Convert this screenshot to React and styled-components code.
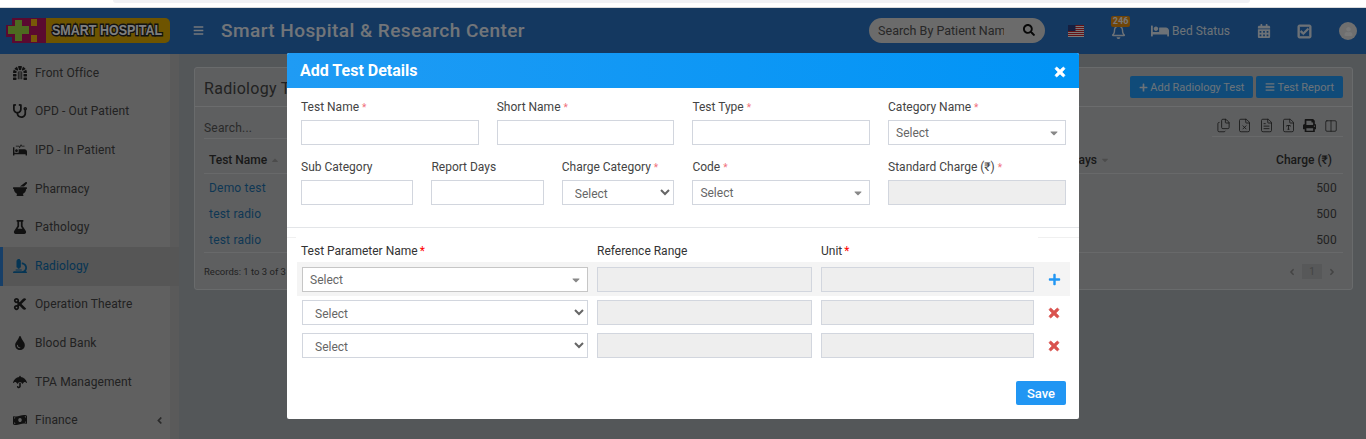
import React from 'react';
import styled, { createGlobalStyle } from 'styled-components';
import {
  FaDungeon, FaStethoscope, FaProcedures, FaMortarPestle, FaFlask, FaMicroscope, FaCut, FaTint,
  FaUmbrella, FaMoneyBillWave, FaBars, FaSearch, FaRegBell, FaBed, FaCalendarAlt, FaRegCheckSquare,
  FaUser, FaPlus, FaPrint, FaTimes, FaAngleLeft, FaAngleRight, FaCaretDown, FaCaretUp,
} from 'react-icons/fa';
import { Files, FileX, FileText, FileType, Columns2 } from 'lucide-react';

const Global = createGlobalStyle`
  html, body { margin: 0; padding: 0; height: 439px; overflow: hidden; background: #fff; }
  body, input, select, button { font-family: Roboto, "Liberation Sans", sans-serif; }
  * { box-sizing: border-box; }
`;

const Page = styled.div`
  width: 1366px;
  height: 439px;
  overflow: hidden;
  display: flex;
  flex-direction: column;
`;
const BrowserStrip = styled.div`
  height: 8px;
  flex: none;
  background: #fff;
  border-bottom: 1px solid #d9dadc;
  padding-left: 113px;
`;
const StripTab = styled.div`
  width: 1137px;
  height: 3px;
  background: #f0f1f5;
  border-radius: 0 0 10px 10px;
`;
const Stage = styled.div`
  position: relative;
  flex: 1;
  min-height: 0;
  display: flex;
  flex-direction: column;
  overflow: hidden;
`;
const Navbar = styled.header`
  height: 46px;
  flex: none;
  background: #2870c0;
  display: flex;
  align-items: center;
  padding: 0 0 2px 5px;
  color: #fff;
`;
const Logo = styled.div`
  width: 165px;
  height: 25px;
  display: flex;
  align-items: center;
  background: linear-gradient(to right, transparent 30px, #dca800 30px);
  border-radius: 0 5px 5px 0;
`;
const LogoText = styled.span`
  font: bold 12.5px/25px "Liberation Sans", sans-serif;
  color: #fff;
  -webkit-text-stroke: 2.4px #222;
  paint-order: stroke fill;
  margin-left: 6px;
  white-space: nowrap;
  transform: scaleY(1.15);
`;
const Burger = styled.span`
  display: flex;
  margin-left: 23px;
  font-size: 11px;
  color: #e8eef6;
`;
const AppTitle = styled.h1`
  margin: 0 0 0 17px;
  font-size: 19px;
  font-weight: 500;
  letter-spacing: 0.45px;
  color: #e4ebf3;
  white-space: nowrap;
`;
const NavRight = styled.div`
  margin-left: auto;
  display: flex;
  align-items: center;
  height: 100%;
`;
const SearchPill = styled.div`
  width: 176px;
  height: 25px;
  border-radius: 13px;
  background: #d6d6d6;
  display: flex;
  align-items: center;
  padding: 0 10px 0 9px;
  color: #111;
  font-size: 12px;
`;
const SearchField = styled.input`
  flex: 1;
  width: 0;
  border: 0;
  background: none;
  outline: none;
  font-size: 12.5px;
  padding: 0;
  margin-right: 19px;
  color: #333;
  &::placeholder { color: #4e4e4e; opacity: 1; }
`;
const NavIcon = styled.span`
  display: flex;
  align-items: center;
  color: #dbe4ee;
  font-size: ${(p) => p.$size || 15}px;
  margin-left: ${(p) => p.$left}px;
  position: relative;
  top: 1px;
`;
const HeavyIcon = styled.span`
  display: flex;
  svg { stroke: currentColor; stroke-width: ${(p) => p.$weight || 30}; }
`;
const Badge = styled.span`
  position: absolute;
  left: 0;
  top: -8px;
  width: 19px;
  height: 11px;
  border-radius: 2px;
  background: #e08a10;
  color: #f0f0f0;
  font-size: 9px;
  font-weight: 700;
  line-height: 11px;
  text-align: center;
`;
const BedLabel = styled.span`
  font-size: 12px;
  margin-left: 3px;
  color: #dbe4ee;
`;
const Avatar = styled.span`
  width: 18px;
  height: 18px;
  margin: 2px 9px 0 27px;
  border-radius: 50%;
  background: #dedede;
  display: flex;
  align-items: center;
  justify-content: center;
  color: #f2f2f2;
  font-size: 9px;
`;
const Main = styled.div`
  flex: 1;
  min-height: 0;
  display: flex;
  background: #a9aeb3;
`;
const Sidebar = styled.nav`
  width: 179px;
  flex: none;
  background: linear-gradient(to right, #c0c0c0 170px, #b4b4b4 170px);
`;
const MenuItem = styled.div`
  height: 38.6px;
  display: flex;
  align-items: center;
  padding: 0 0 1px ${(p) => (p.$active ? 10 : 13)}px;
  font-size: 12px;
  letter-spacing: 0.1px;
  color: ${(p) => (p.$active ? '#0b6aa8' : '#444')};
  background: ${(p) => (p.$active ? '#acacac' : 'transparent')};
  border-left: ${(p) => (p.$active ? '3px solid #2e7fd0' : '0')};
`;
const MenuIcon = styled.span`
  width: 22px;
  flex: none;
  display: flex;
  font-size: 14px;
  color: ${(p) => (p.$active ? '#0b6aa8' : '#222')};
`;
const MenuChevron = styled.span`
  margin-left: auto;
  margin-right: 14px;
  display: flex;
  font-size: 11px;
  color: #555;
`;
const Content = styled.main`
  flex: 1;
  padding: 13px 13px 0 15px;
`;
const Panel = styled.section`
  height: 223px;
  background: #bcbec0;
  border: 1px solid #d2d6d9;
  border-radius: 3px;
`;
const PanelHead = styled.div`
  height: 39px;
  border-bottom: 1px solid #d6d8da;
  display: flex;
  align-items: center;
  padding: 0 9px;
`;
const PanelTitle = styled.h2`
  margin: 2px 0 0;
  font-size: 16px;
  font-weight: 400;
  letter-spacing: 0.3px;
  color: #444;
`;
const HeadButton = styled.button`
  height: 22px;
  border: 0;
  border-radius: 2px;
  background: #2196f3;
  color: #d8e6f2;
  font-size: 11px;
  padding: 0 9px;
  margin-left: ${(p) => (p.$push ? 'auto' : `${p.$left}px`)};
  display: flex;
  align-items: center;
  gap: 2px;
  white-space: nowrap;
`;
const PanelBody = styled.div`
  padding: 0 9px;
`;
const ToolRow = styled.div`
  height: 32px;
  display: flex;
  justify-content: space-between;
`;
const TableSearch = styled.div`
  width: 700px;
  border-bottom: 1px solid #d0d2d4;
  padding-top: 14px;
  font-size: 12px;
  letter-spacing: 0.2px;
  color: #555;
`;
const ExportBar = styled.div`
  width: 131px;
  height: 30px;
  border-bottom: 1px solid #d0d2d4;
  display: flex;
  align-items: center;
  justify-content: flex-end;
  padding: 8px 1px 0 0;
  color: #2a2a2a;
`;
const ExportTool = styled.span`
  width: 21.6px;
  display: flex;
  justify-content: center;
  font-size: 13.5px;
`;
const TableHead = styled.div`
  height: 35px;
  display: grid;
  grid-template-columns: 1fr auto 233px;
  align-items: center;
  padding-top: 7px;
  border-bottom: 1px solid #d0d2d4;
  font-size: 12px;
  font-weight: 500;
  color: #333;
`;
const HeadCell = styled.span`
  display: flex;
  align-items: center;
  gap: 3px;
  justify-content: ${(p) => (p.$end ? 'flex-end' : 'flex-start')};
  padding: ${(p) => (p.$end ? '0 11px 0 0' : '0 0 0 5px')};
`;
const SortCaret = styled.span`
  display: flex;
  font-size: 10px;
  color: #999;
`;
const TableRow = styled.div`
  height: 26px;
  display: flex;
  justify-content: space-between;
  align-items: center;
  padding: 1px 6px 0 5px;
  font-size: 12px;
  letter-spacing: 0.2px;
  color: #444;
`;
const RowLink = styled.span`
  color: #1d6fa8;
`;
const TableFoot = styled.div`
  border-top: 1px solid #d0d2d4;
  height: 37px;
  display: flex;
  justify-content: space-between;
  align-items: center;
  font-size: 9.5px;
  color: #444;
  padding-top: 1px;
`;
const Pager = styled.div`
  display: flex;
  align-items: center;
  gap: 5px;
  margin-right: 6px;
  font-size: 10px;
  color: #888;
`;
const PageNum = styled.span`
  width: 20px;
  height: 15px;
  background: #aeb0b2;
  text-align: center;
  line-height: 15px;
`;
const Overlay = styled.div`
  position: absolute;
  inset: 0;
  background: rgba(0, 0, 0, 0.5);
`;
const Modal = styled.div`
  position: absolute;
  left: 287px;
  top: 45px;
  width: 792px;
  height: 366px;
  background: #fff;
  border-radius: 2px;
  overflow: hidden;
`;
const ModalHead = styled.div`
  height: 35px;
  background: linear-gradient(to right, #1f9bf4, #0094f6);
  color: #fff;
  display: flex;
  align-items: center;
  justify-content: space-between;
  padding: 0 12px 0 13px;
`;
const ModalTitle = styled.h3`
  margin: 0;
  font-size: 16px;
  font-weight: 700;
`;
const CloseIcon = styled.span`
  display: flex;
  font-size: 14px;
  position: relative;
  top: 1px;
  svg { stroke: currentColor; stroke-width: 30; }
`;
const FormBody = styled.div`
  padding: 11px 14px 0 14px;
  display: flex;
  flex-direction: column;
  gap: 14px;
`;
const FieldRow = styled.div`
  display: grid;
  grid-template-columns: repeat(4, 177.5px);
  column-gap: 18.2px;
`;
const SubGrid = styled.div`
  grid-column: span 2;
  display: grid;
  grid-template-columns: repeat(3, 112.4px);
  column-gap: 18px;
`;
const Field = styled.div`
  display: flex;
  flex-direction: column;
  min-width: 0;
`;
const Label = styled.label`
  height: 16px;
  line-height: 16px;
  margin-bottom: 5px;
  font-size: 12px;
  color: #444;
  white-space: nowrap;
`;
const Req = styled.span`
  color: #f0707a;
  font-size: 10px;
  margin-left: 3px;
`;
const TextInput = styled.input`
  width: 100%;
  height: 25px;
  border: 1px solid #d2d6de;
  background: ${(p) => (p.readOnly ? '#eee' : '#fff')};
  padding: 0 8px;
  border-radius: 0;
  outline: none;
  display: block;
`;
const FakeSelect = styled.div`
  height: 25px;
  border: 1px solid ${(p) => (p.$strong ? '#c6c6c6' : '#d2d6de')};
  background: #fff;
  display: flex;
  align-items: center;
  justify-content: space-between;
  padding: 0 5px 0 7px;
  font-size: 12px;
  color: #666;
`;
const SelectCaret = styled.span`
  display: flex;
  font-size: 12px;
  color: #888;
`;
const NativeSelect = styled.select`
  width: 100%;
  height: 25px;
  border: 1px solid #d2d6de;
  background: #fff;
  padding: 2px 8px 0;
  border-radius: 0;
  font-size: 12px;
  color: #666;
  outline: none;
`;
const Divider = styled.hr`
  margin: 22px 0 0;
  border: 0;
  border-top: 1px solid #e3e5e8;
`;
const FaintRule = styled.div`
  margin-top: 9px;
  height: 1px;
  display: flex;
  justify-content: space-between;
`;
const FaintPiece = styled.span`
  width: ${(p) => p.$w}px;
  background: #f0f0f0;
`;
const ParamTable = styled.div`
  margin: 5px 9px 0 10px;
`;
const ParamGrid = styled.div`
  display: grid;
  grid-template-columns: 286px 215px 213px 27px;
  column-gap: 9px;
  align-items: center;
  padding: ${(p) => p.$pad};
  background: ${(p) => (p.$hl ? '#f4f4f4' : 'transparent')};
`;
const ParamLabel = styled.span`
  font-size: 12px;
  color: #333;
  line-height: 16px;
  margin-left: ${(p) => p.$shift || 0}px;
  white-space: nowrap;
`;
const ReqStrong = styled.span`
  color: #f00;
  margin-left: 2px;
`;
const Action = styled.span`
  display: flex;
  justify-content: center;
  font-size: ${(p) => p.$size}px;
  color: ${(p) => p.$color};
  padding-right: 5px;
  svg { stroke: currentColor; stroke-width: ${(p) => p.$weight || 0}; }
`;
const ModalFoot = styled.div`
  display: flex;
  justify-content: flex-end;
  padding: 23px 13px 0 0;
`;
const SaveButton = styled.button`
  width: 50px;
  height: 24px;
  border: 0;
  border-radius: 2px;
  background: #2196f3;
  color: #fff;
  font-size: 13px;
  font-weight: 500;
`;

const LogoMark = () => (
  <svg width="41" height="25" viewBox="0 0 41 25" style={{ flex: 'none' }}>
    <path d="M7 0H41V25H7V19H1V7H7Z" fill="#b41460" />
    <path d="M10 2H17V8H24V16H17V23H10V16H3V8H10Z" fill="#9ad440" />
    <path d="M26 1H32V8H26ZM26 17H32V24H26Z" fill="#f0b010" />
  </svg>
);

const Flag = () => (
  <svg width="16" height="12" viewBox="0 0 16 12">
    <rect width="16" height="12" fill="#f4f4f4" />
    {[0, 2, 4, 6, 8, 10].map((y) => (
      <rect key={y} y={y} width="16" height="1" fill="#c8242c" />
    ))}
    <rect width="7.5" height="6" fill="#2c3e80" />
  </svg>
);

const menu = [
  ['Front Office', FaDungeon],
  ['OPD - Out Patient', FaStethoscope],
  ['IPD - In Patient', FaProcedures],
  ['Pharmacy', FaMortarPestle],
  ['Pathology', FaFlask],
  ['Radiology', FaMicroscope, true],
  ['Operation Theatre', FaCut],
  ['Blood Bank', FaTint],
  ['TPA Management', FaUmbrella],
  ['Finance', FaMoneyBillWave, false, true],
];

const Star = () => <Req>*</Req>;

const TextField = ({ label, required, readOnly }) => (
  <Field>
    <Label>{label}{required && <Star />}</Label>
    <TextInput readOnly={readOnly} />
  </Field>
);

const SelectField = ({ label }) => (
  <Field>
    <Label>{label}<Star /></Label>
    <FakeSelect>Select<SelectCaret><FaCaretDown /></SelectCaret></FakeSelect>
  </Field>
);

export default function App() {
  return (
    <>
      <Global />
      <Page>
        <BrowserStrip><StripTab /></BrowserStrip>
        <Stage>
          <Navbar>
            <Logo>
              <LogoMark />
              <LogoText>SMART HOSPITAL</LogoText>
            </Logo>
            <Burger><FaBars /></Burger>
            <AppTitle>Smart Hospital &amp; Research Center</AppTitle>
            <NavRight>
              <SearchPill>
                <SearchField placeholder="Search By Patient Name" />
                <FaSearch />
              </SearchPill>
              <NavIcon $left={23}><Flag /></NavIcon>
              <NavIcon $left={27} $size={15}><Badge>246</Badge><FaRegBell /></NavIcon>
              <NavIcon $left={25} $size={18}><FaBed /><BedLabel>Bed Status</BedLabel></NavIcon>
              <NavIcon $left={27} $size={14}><FaCalendarAlt /></NavIcon>
              <NavIcon $left={26} $size={15}><HeavyIcon><FaRegCheckSquare /></HeavyIcon></NavIcon>
              <Avatar><FaUser /></Avatar>
            </NavRight>
          </Navbar>
          <Main>
            <Sidebar>
              {menu.map(([name, Icon, active, more]) => (
                <MenuItem key={name} $active={active}>
                  <MenuIcon $active={active}><Icon /></MenuIcon>
                  {name}
                  {more && <MenuChevron><FaAngleLeft /></MenuChevron>}
                </MenuItem>
              ))}
            </Sidebar>
            <Content>
              <Panel>
                <PanelHead>
                  <PanelTitle>Radiology Test List</PanelTitle>
                  <HeadButton $push><FaPlus size={9} />Add Radiology Test</HeadButton>
                  <HeadButton $left={3}><FaBars size={10} />Test Report</HeadButton>
                </PanelHead>
                <PanelBody>
                  <ToolRow>
                    <TableSearch>Search...</TableSearch>
                    <ExportBar>
                      <ExportTool><Files size={15} strokeWidth={1.3} /></ExportTool>
                      <ExportTool><FileX size={15} strokeWidth={1.3} /></ExportTool>
                      <ExportTool><FileText size={15} strokeWidth={1.3} /></ExportTool>
                      <ExportTool><FileType size={15} strokeWidth={1.3} /></ExportTool>
                      <ExportTool><FaPrint /></ExportTool>
                      <ExportTool><Columns2 size={14} strokeWidth={1.3} /></ExportTool>
                    </ExportBar>
                  </ToolRow>
                  <TableHead>
                    <HeadCell>Test Name <SortCaret><FaCaretUp /></SortCaret></HeadCell>
                    <HeadCell>Report Days <SortCaret><FaCaretDown /></SortCaret></HeadCell>
                    <HeadCell $end>Charge (₹)</HeadCell>
                  </TableHead>
                  <TableRow><RowLink>Demo test</RowLink>500</TableRow>
                  <TableRow><RowLink>test radio</RowLink>500</TableRow>
                  <TableRow><RowLink>test radio</RowLink>500</TableRow>
                  <TableFoot>
                    Records: 1 to 3 of 3
                    <Pager><FaAngleLeft /><PageNum>1</PageNum><FaAngleRight /></Pager>
                  </TableFoot>
                </PanelBody>
              </Panel>
            </Content>
          </Main>
          <Overlay />
          <Modal>
            <ModalHead>
              <ModalTitle>Add Test Details</ModalTitle>
              <CloseIcon><FaTimes /></CloseIcon>
            </ModalHead>
            <FormBody>
              <FieldRow>
                <TextField label="Test Name" required />
                <TextField label="Short Name" required />
                <TextField label="Test Type" required />
                <SelectField label="Category Name" />
              </FieldRow>
              <FieldRow>
                <SubGrid>
                  <TextField label="Sub Category" />
                  <TextField label="Report Days" />
                  <Field>
                    <Label>Charge Category<Star /></Label>
                    <NativeSelect defaultValue="Select"><option>Select</option></NativeSelect>
                  </Field>
                </SubGrid>
                <SelectField label="Code" />
                <TextField label="Standard Charge (₹)" required readOnly />
              </FieldRow>
            </FormBody>
            <Divider />
            <FaintRule><FaintPiece $w={9} /><FaintPiece $w={41} /></FaintRule>
            <ParamTable>
              <ParamGrid $pad="0 0 3px 5px">
                <ParamLabel $shift={-1}>Test Parameter Name<ReqStrong>*</ReqStrong></ParamLabel>
                <ParamLabel>Reference Range</ParamLabel>
                <ParamLabel>Unit<ReqStrong>*</ReqStrong></ParamLabel>
                <span />
              </ParamGrid>
              <ParamGrid $hl $pad="5px 0 4px 5px">
                <FakeSelect $strong>Select<SelectCaret><FaCaretDown /></SelectCaret></FakeSelect>
                <TextInput readOnly />
                <TextInput readOnly />
                <Action $size={13} $color="#2196f3"><FaPlus /></Action>
              </ParamGrid>
              <ParamGrid $pad="4px 0 4px 5px">
                <NativeSelect defaultValue="Select"><option>Select</option></NativeSelect>
                <TextInput readOnly />
                <TextInput readOnly />
                <Action $size={14} $weight={30} $color="#d9534f"><FaTimes /></Action>
              </ParamGrid>
              <ParamGrid $pad="4px 0 0 5px">
                <NativeSelect defaultValue="Select"><option>Select</option></NativeSelect>
                <TextInput readOnly />
                <TextInput readOnly />
                <Action $size={14} $weight={30} $color="#d9534f"><FaTimes /></Action>
              </ParamGrid>
            </ParamTable>
            <ModalFoot><SaveButton>Save</SaveButton></ModalFoot>
          </Modal>
        </Stage>
      </Page>
    </>
  );
}
